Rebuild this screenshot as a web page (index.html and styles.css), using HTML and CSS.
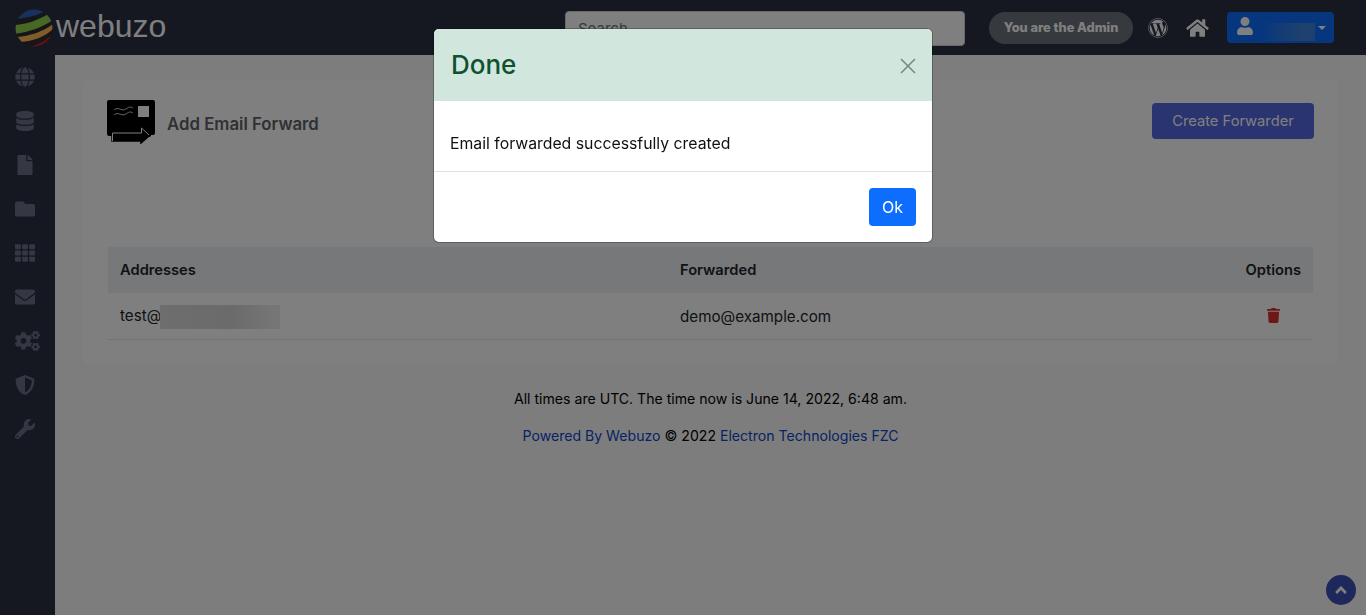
FILE: index.html
```html
<!DOCTYPE html>
<html lang="en">
<head>
    <meta charset="UTF-8">
    <meta name="viewport" content="width=device-width, initial-scale=1.0">
    <title>Webuzo - Add Email Forward</title>
    <link rel="stylesheet" href="styles.css">
</head>
<body>
    <div class="topbar">
        <a class="logo" href="#">
            <svg class="logo-globe" viewBox="0 0 38 38" aria-hidden="true">
                <defs><clipPath id="globeClip"><circle cx="19" cy="19" r="18.5"/></clipPath></defs>
                <g clip-path="url(#globeClip)">
                    <rect width="38" height="38" fill="#2a2c34"/>
                    <path d="M2 10 C10 9 20 7 29 3 L22 -1 L8 1 Z" fill="#3560bd"/>
                    <path d="M0 16 C12 15 24 11 33 5 L38 11 C28 18 14 23 0 25 Z" fill="#8fd24a"/>
                    <path d="M2 28 C14 27 28 23 38 15 L38 20 C30 28 18 32 6 33 Z" fill="#ffb850"/>
                    <path d="M12 38 C22 37 31 32 37 25 L34 38 Z" fill="#d81e1e"/>
                </g>
            </svg>
            <span class="logo-text">webuzo</span>
        </a>
        <input class="search" type="text" placeholder="Search...">
        <span class="admin-pill">You are the Admin</span>
        <svg class="top-icon wp-icon" viewBox="0 0 512 512"><path d="M61.7 169.4l101.5 278C92.2 413 43.3 340.2 43.3 256c0-30.9 6.6-60.1 18.4-86.6zm337.9 75.9c0-26.3-9.4-44.5-17.5-58.7-10.8-17.5-20.9-32.4-20.9-49.9 0-19.6 14.8-37.8 35.7-37.8.9 0 1.8.1 2.8.2-37.9-34.7-88.3-55.9-143.7-55.9-74.3 0-139.7 38.1-177.8 95.9 5 .2 9.7.3 13.7.3 22.2 0 56.7-2.7 56.7-2.7 11.5-.7 12.8 16.2 1.4 17.5 0 0-11.5 1.3-24.3 2l77.5 230.4L249.8 247l-33.1-90.8c-11.5-.7-22.3-2-22.3-2-11.5-.7-10.1-18.2 1.3-17.5 0 0 35.1 2.7 56 2.7 22.2 0 56.7-2.7 56.7-2.7 11.5-.7 12.8 16.2 1.4 17.5 0 0-11.5 1.3-24.3 2l76.9 228.7 21.2-70.9c9-29.4 16-50.5 16-68.7zm-139.9 29.3l-63.8 185.5c19.1 5.6 39.2 8.7 60.1 8.7 24.8 0 48.5-4.3 70.6-12.1-.6-.9-1.1-1.9-1.5-2.9l-65.4-179.2zm183-120.7c.9 6.8 1.4 14 1.4 21.9 0 21.6-4 45.8-16.2 76.2l-65 187.9C426.2 403 468.7 334.5 468.7 256c0-37-9.4-71.8-26-102.1zM504 256c0 136.8-111.3 248-248 248C119.2 504 8 392.7 8 256 8 119.2 119.2 8 256 8c136.7 0 248 111.2 248 248zm-11.4 0c0-130.5-106.2-236.6-236.6-236.6C125.5 19.4 19.4 125.5 19.4 256S125.6 492.6 256 492.6c130.5 0 236.6-106.1 236.6-236.6z"/></svg>
        <svg class="top-icon home-icon" viewBox="0 0 576 512"><path d="M280.37 148.26L96 300.11V464a16 16 0 0 0 16 16l112.06-.29a16 16 0 0 0 15.92-16V368a16 16 0 0 1 16-16h64a16 16 0 0 1 16 16v95.64a16 16 0 0 0 16 16.05L464 480a16 16 0 0 0 16-16V300L295.67 148.26a12.19 12.19 0 0 0-15.3 0zM571.6 251.47L488 182.56V44.05a12 12 0 0 0-12-12h-56a12 12 0 0 0-12 12v72.61L318.47 43a48 48 0 0 0-61 0L4.34 251.47a12 12 0 0 0-1.6 16.9l25.5 31A12 12 0 0 0 45.15 301l235.22-193.74a12.19 12.19 0 0 1 15.3 0L530.9 301a12 12 0 0 0 16.9-1.6l25.5-31a12 12 0 0 0-1.7-16.93z"/></svg>
        <button class="user-button">
            <svg class="user-icon" viewBox="0 0 448 512"><path d="M224 256c70.7 0 128-57.3 128-128S294.7 0 224 0 96 57.3 96 128s57.3 128 128 128zm89.6 32h-16.7c-22.2 10.2-46.9 16-72.9 16s-50.6-5.8-72.9-16h-16.7C60.2 288 0 348.2 0 422.4V464c0 26.5 21.5 48 48 48h352c26.5 0 48-21.5 48-48v-41.6c0-74.2-60.2-134.4-134.4-134.4z"/></svg>
            <span class="user-name"></span>
            <span class="caret"></span>
        </button>
    </div>

    <div class="layout">
        <div class="sidebar">
            <a class="side-item" href="#"><svg viewBox="0 0 496 512"><path d="M336.5 160C322 70.7 287.8 8 248 8s-74 62.7-88.5 152h177zM152 256c0 22.2 1.2 43.5 3.3 64h185.3c2.1-20.5 3.3-41.8 3.3-64s-1.2-43.5-3.3-64H155.3c-2.1 20.5-3.3 41.8-3.3 64zm324.7-96c-28.6-67.9-86.5-120.4-158-141.6 24.4 33.8 41.2 84.7 50 141.6h108zM177.2 18.4C105.8 39.6 47.8 92.1 19.3 160h108c8.7-56.9 25.5-107.8 49.9-141.6zM487.4 192H372.7c2.1 21 3.3 42.5 3.3 64s-1.2 43-3.3 64h114.6c5.5-20.5 8.6-41.8 8.6-64s-3.1-43.5-8.5-64zM120 256c0-21.5 1.2-43 3.3-64H8.6C3.2 212.5 0 233.8 0 256s3.2 43.5 8.6 64h114.6c-2-21-3.2-42.5-3.2-64zm39.5 96c14.5 89.3 48.7 152 88.5 152s74-62.7 88.5-152h-177zm159.3 141.6c71.4-21.2 129.4-73.7 158-141.6h-108c-8.8 56.9-25.6 107.8-50 141.6zM19.3 352c28.6 67.9 86.5 120.4 158 141.6-24.4-33.8-41.2-84.7-50-141.6h-108z"/></svg></a>
            <a class="side-item" href="#"><svg viewBox="0 0 448 512"><path d="M448 73.143v45.714C448 159.143 347.667 192 224 192S0 159.143 0 118.857V73.143C0 32.857 100.333 0 224 0s224 32.857 224 73.143zM448 176v102.857C448 319.143 347.667 352 224 352S0 319.143 0 278.857V176c48.125 33.143 136.208 48.572 224 48.572S399.874 209.143 448 176zm0 160v102.857C448 479.143 347.667 512 224 512S0 479.143 0 438.857V336c48.125 33.143 136.208 48.572 224 48.572S399.874 369.143 448 336z"/></svg></a>
            <a class="side-item" href="#"><svg viewBox="0 0 384 512"><path d="M224 136V0H24C10.7 0 0 10.7 0 24v464c0 13.3 10.7 24 24 24h336c13.3 0 24-10.7 24-24V160H248c-13.2 0-24-10.8-24-24zm160-14.1v6.1H256V0h6.1c6.4 0 12.5 2.5 17 7l97.9 98c4.5 4.5 7 10.6 7 16.9z"/></svg></a>
            <a class="side-item" href="#"><svg viewBox="0 0 512 512"><path d="M464 128H272l-64-64H48C21.49 64 0 85.49 0 112v288c0 26.51 21.49 48 48 48h416c26.51 0 48-21.49 48-48V176c0-26.51-21.49-48-48-48z"/></svg></a>
            <a class="side-item" href="#"><svg viewBox="0 0 512 512"><path d="M149.333 56v80c0 13.255-10.745 24-24 24H24c-13.255 0-24-10.745-24-24V56c0-13.255 10.745-24 24-24h101.333c13.255 0 24 10.745 24 24zm181.334 240v-80c0-13.255-10.745-24-24-24H205.333c-13.255 0-24 10.745-24 24v80c0 13.255 10.745 24 24 24h101.333c13.256 0 24.001-10.745 24.001-24zm32-240v80c0 13.255 10.745 24 24 24H488c13.255 0 24-10.745 24-24V56c0-13.255-10.745-24-24-24H386.667c-13.255 0-24 10.745-24 24zm-32 80V56c0-13.255-10.745-24-24-24H205.333c-13.255 0-24 10.745-24 24v80c0 13.255 10.745 24 24 24h101.333c13.256 0 24.001-10.745 24.001-24zm-205.334 56H24c-13.255 0-24 10.745-24 24v80c0 13.255 10.745 24 24 24h101.333c13.255 0 24-10.745 24-24v-80c0-13.255-10.745-24-24-24zM0 376v80c0 13.255 10.745 24 24 24h101.333c13.255 0 24-10.745 24-24v-80c0-13.255-10.745-24-24-24H24c-13.255 0-24 10.745-24 24zm386.667-56H488c13.255 0 24-10.745 24-24v-80c0-13.255-10.745-24-24-24H386.667c-13.255 0-24 10.745-24 24v80c0 13.255 10.745 24 24 24zm0 160H488c13.255 0 24-10.745 24-24v-80c0-13.255-10.745-24-24-24H386.667c-13.255 0-24 10.745-24 24v80c0 13.255 10.745 24 24 24zM181.333 376v80c0 13.255 10.745 24 24 24h101.333c13.255 0 24-10.745 24-24v-80c0-13.255-10.745-24-24-24H205.333c-13.255 0-24 10.745-24 24z"/></svg></a>
            <a class="side-item" href="#"><svg viewBox="0 0 512 512"><path d="M502.3 190.8c3.9-3.1 9.7-.2 9.7 4.7V400c0 26.5-21.5 48-48 48H48c-26.5 0-48-21.5-48-48V195.6c0-5 5.7-7.8 9.7-4.7 22.4 17.4 52.1 39.5 154.1 113.6 21.1 15.4 56.7 47.8 92.2 47.6 35.7.3 72-32.8 92.3-47.6 102-74.1 131.6-96.3 154-113.7zM256 320c23.2.4 56.6-29.2 73.4-41.4 132.7-96.3 142.8-104.7 173.4-128.7 5.8-4.5 9.2-11.5 9.2-18.9v-19c0-26.5-21.5-48-48-48H48C21.5 64 0 85.5 0 112v19c0 7.4 3.4 14.3 9.2 18.9 30.6 23.9 40.7 32.4 173.4 128.7 16.8 12.2 50.2 41.8 73.4 41.4z"/></svg></a>
            <a class="side-item" href="#"><svg class="cogs-icon" viewBox="0 0 640 512"><path d="M512.1 191l-8.2 14.3c-3 5.3-9.4 7.5-15.1 5.4-11.8-4.4-22.6-10.7-32.1-18.6-4.6-3.8-5.8-10.5-2.8-15.7l8.2-14.3c-6.9-8-12.3-17.3-15.9-27.4h-16.5c-6 0-11.2-4.3-12.2-10.3-2-12-2.1-24.6 0-37.1 1-6 6.2-10.4 12.2-10.4h16.5c3.6-10.1 9-19.4 15.9-27.4l-8.2-14.3c-3-5.2-1.9-11.9 2.8-15.7 9.5-7.9 20.4-14.2 32.1-18.6 5.7-2.1 12.1.1 15.1 5.4l8.2 14.3c10.5-1.9 21.2-1.9 31.7 0L552 6.3c3-5.3 9.4-7.5 15.1-5.4 11.8 4.4 22.6 10.7 32.1 18.6 4.6 3.8 5.8 10.5 2.8 15.7l-8.2 14.3c6.9 8 12.3 17.3 15.9 27.4h16.5c6 0 11.2 4.3 12.2 10.3 2 12 2.1 24.6 0 37.1-1 6-6.2 10.4-12.2 10.4h-16.5c-3.6 10.1-9 19.4-15.9 27.4l8.2 14.3c3 5.2 1.9 11.9-2.8 15.7-9.5 7.9-20.4 14.2-32.1 18.6-5.7 2.1-12.1-.1-15.1-5.4l-8.2-14.3c-10.4 1.9-21.2 1.9-31.7 0zm-10.5-58.8c38.5 29.6 82.4-14.3 52.8-52.8-38.5-29.7-82.4 14.3-52.8 52.8zM386.3 286.1l33.7 16.8c10.1 5.8 14.5 18.1 10.5 29.1-8.9 24.2-26.4 46.4-42.6 65.8-7.4 8.9-20.2 11.1-30.3 5.3l-29.1-16.8c-16 13.7-34.6 24.6-54.9 31.7v33.6c0 11.6-8.3 21.6-19.7 23.6-24.6 4.2-50.4 4.4-75.9 0-11.5-2-20-11.9-20-23.6V418c-20.3-7.2-38.9-18-54.9-31.7L74 403c-10 5.8-22.9 3.6-30.3-5.3-16.2-19.4-33.3-41.6-42.2-65.7-4-10.9.4-23.2 10.5-29.1l33.3-16.8c-3.9-20.9-3.9-42.4 0-63.4L12 205.8c-10.1-5.8-14.6-18.1-10.5-29 8.9-24.2 26-46.4 42.2-65.8 7.4-8.9 20.2-11.1 30.3-5.3l29.1 16.8c16-13.7 34.6-24.6 54.9-31.7V57.1c0-11.5 8.2-21.5 19.6-23.5 24.6-4.2 50.5-4.4 76-.1 11.5 2 20 11.9 20 23.6v33.6c20.3 7.2 38.9 18 54.9 31.7l29.1-16.8c10-5.8 22.9-3.6 30.3 5.3 16.2 19.4 33.2 41.6 42.1 65.8 4 10.9.1 23.2-10 29.1l-33.7 16.8c3.9 21 3.9 42.5 0 63.5zm-117.6 21.1c59.2-77-28.7-164.9-105.7-105.7-59.2 77 28.7 164.9 105.7 105.7zm243.4 182.7l-8.2 14.3c-3 5.3-9.4 7.5-15.1 5.4-11.8-4.4-22.6-10.7-32.1-18.6-4.6-3.8-5.8-10.5-2.8-15.7l8.2-14.3c-6.9-8-12.3-17.3-15.9-27.4h-16.5c-6 0-11.2-4.3-12.2-10.3-2-12-2.1-24.6 0-37.1 1-6 6.2-10.4 12.2-10.4h16.5c3.6-10.1 9-19.4 15.9-27.4l-8.2-14.3c-3-5.2-1.9-11.9 2.8-15.7 9.5-7.9 20.4-14.2 32.1-18.6 5.7-2.1 12.1.1 15.1 5.4l8.2 14.3c10.5-1.9 21.2-1.9 31.7 0l8.2-14.3c3-5.3 9.4-7.5 15.1-5.4 11.8 4.4 22.6 10.7 32.1 18.6 4.6 3.8 5.8 10.5 2.8 15.7l-8.2 14.3c6.9 8 12.3 17.3 15.9 27.4h16.5c6 0 11.2 4.3 12.2 10.3 2 12 2.1 24.6 0 37.1-1 6-6.2 10.4-12.2 10.4h-16.5c-3.6 10.1-9 19.4-15.9 27.4l8.2 14.3c3 5.2 1.9 11.9-2.8 15.7-9.5 7.9-20.4 14.2-32.1 18.6-5.7 2.1-12.1-.1-15.1-5.4l-8.2-14.3c-10.4 1.9-21.2 1.9-31.7 0zM501.6 431c38.5 29.6 82.4-14.3 52.8-52.8-38.5-29.6-82.4 14.3-52.8 52.8z"/></svg></a>
            <a class="side-item" href="#"><svg viewBox="0 0 512 512"><path d="M466.5 83.7l-192-80a48.15 48.15 0 0 0-36.9 0l-192 80C27.7 91.1 16 108.6 16 128c0 198.5 114.5 335.7 221.5 380.3 11.8 4.9 25.1 4.9 36.9 0C360.1 472.6 496 349.3 496 128c0-19.4-11.7-36.9-29.5-44.3zM256.1 446.3l-.1-381 175.9 73.3c-3.3 151.4-82.1 261.1-175.8 307.7z"/></svg></a>
            <a class="side-item" href="#"><svg viewBox="0 0 512 512"><path d="M507.73 109.1c-2.24-9.03-13.54-12.09-20.12-5.51l-74.36 74.36-67.88-11.31-11.31-67.88 74.36-74.36c6.62-6.62 3.43-17.9-5.66-20.16-47.38-11.74-99.55.91-136.58 37.93-39.64 39.64-50.55 97.1-34.05 147.2L18.74 402.76c-24.99 24.99-24.99 65.51 0 90.5 24.99 24.99 65.51 24.99 90.5 0l213.21-213.21c50.12 16.71 107.47 5.68 147.37-34.22 37.07-37.07 49.7-89.32 37.91-136.73zM64 472c-13.25 0-24-10.75-24-24 0-13.26 10.75-24 24-24s24 10.74 24 24c0 13.25-10.75 24-24 24z"/></svg></a>
        </div>

        <div class="main-content">
            <div class="card">
                <div class="card-head">
                    <svg class="forward-icon" viewBox="0 0 48 44" aria-hidden="true">
                        <path d="M2 0H46A2 2 0 0 1 48 2V33A2 2 0 0 1 46 35H44L43 37H6V36H2A2 2 0 0 1 0 34V2A2 2 0 0 1 2 0Z" fill="#000"/>
                        <rect x="31" y="6" width="11" height="11" fill="#fff"/>
                        <path d="M7 10C11 6 15 12 19 9S24 7 26 8M7 15C11 11 15 17 19 14S24 12 26 13" fill="none" stroke="#fff" stroke-width="0.8"/>
                        <path d="M5 32H34V28L43 35L34 43V41H5Z" fill="#000" stroke="#000" stroke-width="1.5"/>
                        <path d="M5.5 41V33H34.5V28L42 35" fill="none" stroke="#fff" stroke-width="1"/>
                    </svg>
                    <h2 class="card-title">Add Email Forward</h2>
                    <button class="create-button">Create Forwarder</button>
                </div>
                <table class="forward-table">
                    <thead>
                        <tr>
                            <th class="col-address">Addresses</th>
                            <th>Forwarded</th>
                            <th class="col-options">Options</th>
                        </tr>
                    </thead>
                    <tbody>
                        <tr>
                            <td>test@<span class="blur-domain"></span></td>
                            <td>demo@example.com</td>
                            <td class="col-options">
                                <svg class="trash-icon" viewBox="0 0 448 512"><path d="M432 32H312l-9.4-18.7A24 24 0 0 0 281.1 0H166.8a23.72 23.72 0 0 0-21.4 13.3L136 32H16A16 16 0 0 0 0 48v32a16 16 0 0 0 16 16h416a16 16 0 0 0 16-16V48a16 16 0 0 0-16-16zM53.2 467a48 48 0 0 0 47.9 45h245.8a48 48 0 0 0 47.9-45L416 128H32z"/></svg>
                            </td>
                        </tr>
                    </tbody>
                </table>
            </div>
            <div class="page-footer">
                <p class="footer-time">All times are UTC. The time now is June 14, 2022, 6:48 am.</p>
                <p class="footer-copy"><a href="#">Powered By Webuzo</a> © 2022 <a href="#">Electron Technologies FZC</a></p>
            </div>
        </div>
    </div>

    <a class="scroll-top" href="#">
        <svg viewBox="0 0 320 512"><path d="M177 159.7l136 136c9.4 9.4 9.4 24.6 0 33.9l-22.6 22.6c-9.4 9.4-24.6 9.4-33.9 0L160 255.9l-96.4 96.4c-9.4 9.4-24.6 9.4-33.9 0L7 329.7c-9.5-9.4-9.5-24.6-.1-34l136-136c9.4-9.5 24.6-9.5 34.1 0z"/></svg>
    </a>

    <div class="modal-backdrop"></div>
    <div class="modal-wrap">
        <div class="modal">
            <div class="modal-header">
                <h3 class="modal-title">Done</h3>
                <svg class="modal-close" viewBox="0 0 16 16"><path d="M1 1L15 15M15 1L1 15" fill="none" stroke="currentColor" stroke-width="1.5"/></svg>
            </div>
            <div class="modal-body">Email forwarded successfully created</div>
            <div class="modal-footer"><button class="ok-button">Ok</button></div>
        </div>
    </div>
</body>
</html>
```

FILE: styles.css
```css
* {
    box-sizing: border-box;
}

body {
    margin: 0;
    height: 100vh;
    overflow: hidden;
    background: #fbfbfb;
    color: #000;
    font-family: 'Inter', 'Open Sans', sans-serif;
    font-size: 15px;
    display: flex;
    flex-direction: column;
}

a {
    text-decoration: none;
}

.topbar {
    height: 55px;
    flex-shrink: 0;
    background: #2a2e42;
    display: flex;
    align-items: center;
}

.logo {
    display: flex;
    align-items: center;
    width: 565px;
    padding-left: 15px;
}

.logo-globe {
    width: 38px;
    height: 38px;
}

.logo-text {
    font-family: 'Liberation Sans', sans-serif;
    font-size: 32px;
    color: #fff;
    margin: -2px 0 0 3px;
}

.search {
    width: 400px;
    height: 35px;
    margin-top: 1px;
    padding: 0 12px;
    background: #fff;
    border: 1px solid #ced4da;
    border-radius: 4px;
    font-family: inherit;
    font-size: 15px;
}

.admin-pill {
    width: 144px;
    height: 32px;
    margin-left: 24px;
    border-radius: 16px;
    background: #6c757d;
    color: #fff;
    font-size: 12.8px;
    font-weight: 800;
    line-height: 32px;
    text-align: center;
    white-space: nowrap;
}

.top-icon {
    fill: #fff;
}

.wp-icon {
    width: 20px;
    height: 20px;
    margin-left: 15px;
}

.home-icon {
    width: 23px;
    height: 20px;
    margin-left: 18px;
}

.user-button {
    width: 107px;
    height: 31px;
    margin-left: 18px;
    padding: 0 0 0 10px;
    background: #0d6efd;
    border: none;
    border-radius: 4px;
    display: flex;
    align-items: center;
}

.user-icon {
    width: 16px;
    height: 18px;
    margin-top: -3px;
    fill: #fff;
    flex-shrink: 0;
}

.user-name {
    width: 53px;
    height: 18px;
    margin: 8px 0 0 9px;
    background: linear-gradient(90deg, #0d6efd 0%, #2a7ae8 40%, #3f83dc 80%, #3a80de 100%);
}

.caret {
    margin-left: 3px;
    border-top: 4px solid #fff;
    border-left: 4px solid transparent;
    border-right: 4px solid transparent;
}

.layout {
    flex: 1;
    display: flex;
    min-height: 0;
}

.sidebar {
    width: 55px;
    flex-shrink: 0;
    background: #2a2e42;
}

.side-item {
    height: 44px;
    padding-left: 15px;
    display: flex;
    align-items: center;
}

.side-item svg {
    width: 20px;
    height: 20px;
    fill: #6a7184;
}

.side-item .cogs-icon {
    width: 25px;
}

.main-content {
    flex: 1;
    padding: 24px 28px 0;
}

.card {
    height: 285px;
    padding: 21px 24px 25px;
    background: #fff;
    border-radius: 5px;
}

.card-head {
    height: 44px;
    margin-bottom: 103px;
    display: flex;
    align-items: center;
}

.forward-icon {
    width: 48px;
    height: 44px;
    flex-shrink: 0;
}

.card-title {
    margin: 3px 0 0 12px;
    font-size: 16.8px;
    font-weight: 600;
    color: #5e6368;
    flex: 1;
}

.create-button {
    width: 162px;
    height: 36px;
    margin-top: -2px;
    padding-bottom: 2px;
    background: #5468e0;
    border: none;
    border-radius: 4px;
    color: #fff;
    font-family: inherit;
    font-size: 14.7px;
}

.forward-table {
    width: 1205px;
    margin-left: 1px;
    table-layout: fixed;
    border-collapse: collapse;
}

.forward-table th {
    height: 46px;
    padding: 0 12px;
    background: #eef1f5;
    text-align: left;
    font-size: 14.7px;
    font-weight: 600;
    color: #212529;
}

.forward-table td {
    height: 46px;
    padding: 2px 12px 0;
    border-bottom: 1px solid #e4e6e9;
    font-size: 15.2px;
    color: #212529;
    white-space: nowrap;
}

.forward-table .col-address {
    width: 560px;
}

.forward-table .col-options {
    width: 140px;
    text-align: right;
}

.blur-domain {
    display: inline-block;
    width: 120px;
    height: 24px;
    margin-left: -1px;
    vertical-align: middle;
    background: linear-gradient(90deg, #dcdcdc, #d6d6d6 60%, #ececec 95%);
}

.trash-icon {
    width: 13px;
    height: 15px;
    margin: -6px 21px 0 0;
    fill: #d9332a;
    vertical-align: middle;
}

.page-footer {
    text-align: center;
    font-size: 14.1px;
    color: #000;
}

.footer-time {
    margin: 23px 0 0;
    line-height: 24px;
}

.footer-copy {
    margin: 13px 0 0;
    line-height: 24px;
}

.footer-copy a {
    color: #0d47c9;
}

.scroll-top {
    position: fixed;
    right: 10px;
    bottom: 10px;
    width: 30px;
    height: 30px;
    border-radius: 50%;
    background: #3f51b5;
    display: flex;
    align-items: center;
    justify-content: center;
}

.scroll-top svg {
    width: 12px;
    height: 18px;
    fill: #fff;
}

.modal-backdrop {
    position: fixed;
    inset: 0;
    background: rgba(0, 0, 0, 0.5);
}

.modal-wrap {
    position: fixed;
    inset: 0;
    padding-top: 29px;
    display: flex;
    justify-content: center;
    align-items: flex-start;
}

.modal {
    width: 498px;
    height: 213px;
    background: #fff;
    border-radius: 5px;
    box-shadow: 0 0 0 1px rgba(0, 0, 0, 0.25);
}

.modal-header {
    height: 72px;
    padding: 0 16px 2px 17px;
    background: #d1e7dd;
    border-radius: 5px 5px 0 0;
    display: flex;
    align-items: center;
    justify-content: space-between;
    color: #0f5132;
}

.modal-title {
    margin: 0;
    font-size: 26px;
    font-weight: 500;
}

.modal-close {
    width: 16px;
    height: 16px;
    margin-top: 3px;
    color: #6f8a7e;
}

.modal-body {
    height: 71px;
    padding: 31px 16px 0;
    border-bottom: 1px solid #dee2e6;
    font-size: 15.8px;
    line-height: 24px;
    white-space: nowrap;
    color: #111;
}

.modal-footer {
    padding: 16px;
    display: flex;
    justify-content: flex-end;
}

.ok-button {
    width: 47px;
    height: 38px;
    background: #0d6efd;
    border: none;
    border-radius: 4px;
    color: #fff;
    font-family: inherit;
    font-size: 16px;
}
```
